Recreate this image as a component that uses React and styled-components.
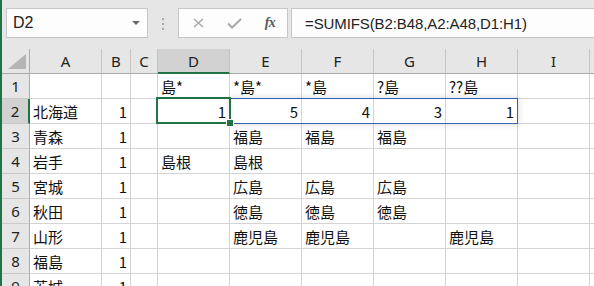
import React from 'react';
import styled, { createGlobalStyle } from 'styled-components';

const Global = createGlobalStyle`
  html, body { margin: 0; padding: 0; background: #fff; }
  body { width: 594px; height: 286px; overflow: hidden; }
`;

const COLS = [
  { key: 'rh', w: 28 },
  { key: 'A', w: 72 },
  { key: 'B', w: 29 },
  { key: 'C', w: 27 },
  { key: 'D', w: 72 },
  { key: 'E', w: 72 },
  { key: 'F', w: 72 },
  { key: 'G', w: 72 },
  { key: 'H', w: 72 },
  { key: 'I', w: 72 },
  { key: 'J', w: 40 },
];
const ROW_H = 25;

const Window = styled.div`
  width: 594px;
  height: 286px;
  overflow: hidden;
  box-sizing: border-box;
  border-left: 2px solid #217346;
  background: #fff;
  display: flex;
  flex-direction: column;
`;

const Toolbar = styled.div`
  height: 49px;
  flex: none;
  box-sizing: border-box;
  background: #e6e6e6;
  display: flex;
  align-items: flex-start;
  padding: 8px 0 0 4px;
`;

const Box = styled.div`
  height: 30px;
  box-sizing: border-box;
  background: #fdfdfd;
  border: 1px solid #c6c6c6;
  display: flex;
  align-items: center;
`;

const NameBox = styled(Box)`
  width: 142px;
  padding: 0 6px;
  justify-content: space-between;
  font-family: 'Liberation Sans', Arial, sans-serif;
  font-size: 16px;
  color: #222;
`;

const Caret = styled.span`
  width: 0;
  height: 0;
  border-left: 4px solid transparent;
  border-right: 4px solid transparent;
  border-top: 4px solid #6a6a6a;
  margin-right: 1px;
`;

const Dots = styled.div`
  width: 2px;
  margin: 10px 14px 0 14px;
  display: flex;
  flex-direction: column;
  gap: 3px;
  & > i {
    display: block;
    width: 2px;
    height: 2px;
    background: #a8a8a8;
  }
`;

const FxBox = styled(Box)`
  width: 110px;
  padding: 0 0 0 13px;
  gap: 0;
`;

const IconSlot = styled.span`
  width: ${(p) => p.$w}px;
  display: flex;
  align-items: center;
  justify-content: center;
`;

const FxText = styled.span`
  font-family: 'Liberation Serif', 'Times New Roman', serif;
  font-style: italic;
  font-weight: bold;
  font-size: 14px;
  color: #5a5a5a;
  letter-spacing: -0.5px;
`;

const FormulaBar = styled(Box)`
  flex: 1;
  margin-left: 3px;
  margin-right: -4px;
  padding-left: 13px;
  font-family: 'Liberation Sans', Arial, sans-serif;
  font-size: 15px;
  color: #222;
  letter-spacing: -0.1px;
`;

const SheetWrap = styled.div`
  position: relative;
  flex: 1;
`;

const Grid = styled.div`
  display: grid;
  grid-template-columns: ${COLS.map((c) => c.w + 'px').join(' ')};
  grid-auto-rows: ${ROW_H}px;
`;

const Corner = styled.div`
  box-sizing: border-box;
  background: #e6e6e6;
  border-right: 1px solid #ababab;
  border-bottom: 1px solid #ababab;
  display: flex;
  align-items: flex-end;
  justify-content: flex-end;
  padding: 0 3px 4px 0;
`;

const ColHeader = styled.div`
  box-sizing: border-box;
  background: ${(p) => (p.$active ? '#d2d2d2' : '#e6e6e6')};
  border-right: 1px solid #c4c4c4;
  border-bottom: ${(p) => (p.$active ? '2px solid #217346' : '1px solid #ababab')};
  display: flex;
  align-items: center;
  justify-content: center;
  padding-top: ${(p) => (p.$active ? 1 : 0)}px;
  font-family: 'Noto Sans', 'Liberation Sans', sans-serif;
  font-size: 15px;
  color: #222;
`;

const RowHeader = styled.div`
  box-sizing: border-box;
  background: ${(p) => (p.$active ? '#d2d2d2' : '#e6e6e6')};
  border-right: ${(p) => (p.$active ? '2px solid #217346' : '1px solid #ababab')};
  border-bottom: 1px solid #c9c9c9;
  display: flex;
  align-items: center;
  justify-content: center;
  font-family: 'Noto Sans', 'Liberation Sans', sans-serif;
  font-size: 15px;
  color: #222;
`;

const Cell = styled.div`
  box-sizing: border-box;
  border-right: 1px solid #d4d4d4;
  border-bottom: 1px solid #d4d4d4;
  display: flex;
  align-items: center;
  justify-content: ${(p) => (p.$num ? 'flex-end' : 'flex-start')};
  padding: ${(p) => (p.$num ? '0 3px 0 0' : '0 0 0 3px')};
  font-family: 'Noto Sans CJK JP', 'Noto Sans', sans-serif;
  font-size: 15px;
  color: #111;
  white-space: nowrap;
  overflow: visible;
  line-height: 1;
`;

const RangeBox = styled.div`
  position: absolute;
  box-sizing: border-box;
  border: 1.5px solid #3461b0;
  box-shadow: 0 0 6px 1px rgba(0, 0, 0, 0.13);
  pointer-events: none;
  z-index: 1;
`;

const ActiveBox = styled.div`
  position: absolute;
  box-sizing: border-box;
  border: 2px solid #217346;
  pointer-events: none;
  z-index: 2;
`;

const Handle = styled.span`
  position: absolute;
  right: -4px;
  bottom: -4px;
  width: 6px;
  height: 6px;
  background: #217346;
  box-shadow: 0 0 0 1px #fff;
`;

const LETTERS = ['A', 'B', 'C', 'D', 'E', 'F', 'G', 'H', 'I', ''];

const DATA = [
  { D: '島*', E: '*島*', F: '*島', G: '?島', H: '??島' },
  { A: '北海道', B: 1, D: 1, E: 5, F: 4, G: 3, H: 1 },
  { A: '青森', B: 1, E: '福島', F: '福島', G: '福島' },
  { A: '岩手', B: 1, D: '島根', E: '島根' },
  { A: '宮城', B: 1, E: '広島', F: '広島', G: '広島' },
  { A: '秋田', B: 1, E: '徳島', F: '徳島', G: '徳島' },
  { A: '山形', B: 1, E: '鹿児島', F: '鹿児島', H: '鹿児島' },
  { A: '福島', B: 1 },
  { A: '茨城', B: 1 },
];

const colX = (key) => {
  let x = 0;
  for (const c of COLS) {
    if (c.key === key) return x;
    x += c.w;
  }
  return x;
};
const colW = (key) => COLS.find((c) => c.key === key).w;
const rowY = (n) => ROW_H * n;

export default function App() {
  const dataCols = COLS.slice(1).map((c) => c.key);
  const activeLeft = colX('D');
  const rangeLeft = colX('E');
  const rangeRight = colX('I');
  return (
    <>
      <Global />
      <Window>
        <Toolbar>
          <NameBox>
            <span>D2</span>
            <Caret />
          </NameBox>
          <Dots>
            <i />
            <i />
            <i />
          </Dots>
          <FxBox>
            <IconSlot $w={12}>
              <svg width="11" height="10" viewBox="0 0 11 10">
                <path d="M1 1 L10 9 M10 1 L1 9" stroke="#a9a9a9" strokeWidth="1.5" fill="none" />
              </svg>
            </IconSlot>
            <IconSlot $w={60}>
              <svg width="15" height="11" viewBox="0 0 15 11">
                <path d="M1 5.5 L5 9.5 L14 1" stroke="#a9a9a9" strokeWidth="2" fill="none" />
              </svg>
            </IconSlot>
            <IconSlot $w={12}>
              <FxText>fx</FxText>
            </IconSlot>
          </FxBox>
          <FormulaBar>=SUMIFS(B2:B48,A2:A48,D1:H1)</FormulaBar>
        </Toolbar>
        <SheetWrap>
          <Grid>
            <Corner>
              <svg width="18" height="15" viewBox="0 0 18 15">
                <polygon points="0,15 18,15 18,0" fill="#b5b5b5" />
              </svg>
            </Corner>
            {LETTERS.map((l, i) => (
              <ColHeader key={'h' + i} $active={l === 'D'}>
                {l}
              </ColHeader>
            ))}
            {DATA.map((row, r) => (
              <React.Fragment key={'r' + r}>
                <RowHeader $active={r === 1}>{r + 1}</RowHeader>
                {dataCols.map((k) => {
                  const v = row[k];
                  return (
                    <Cell key={k} $num={typeof v === 'number'}>
                      {v !== undefined ? v : ''}
                    </Cell>
                  );
                })}
              </React.Fragment>
            ))}
          </Grid>
          <RangeBox
            style={{
              left: rangeLeft,
              top: rowY(2) - 1,
              width: rangeRight - rangeLeft,
              height: ROW_H + 1,
            }}
          />
          <ActiveBox
            style={{
              left: activeLeft - 2,
              top: rowY(2) - 2,
              width: colW('D') + 3,
              height: ROW_H + 2,
            }}
          >
            <Handle />
          </ActiveBox>
        </SheetWrap>
      </Window>
    </>
  );
}
